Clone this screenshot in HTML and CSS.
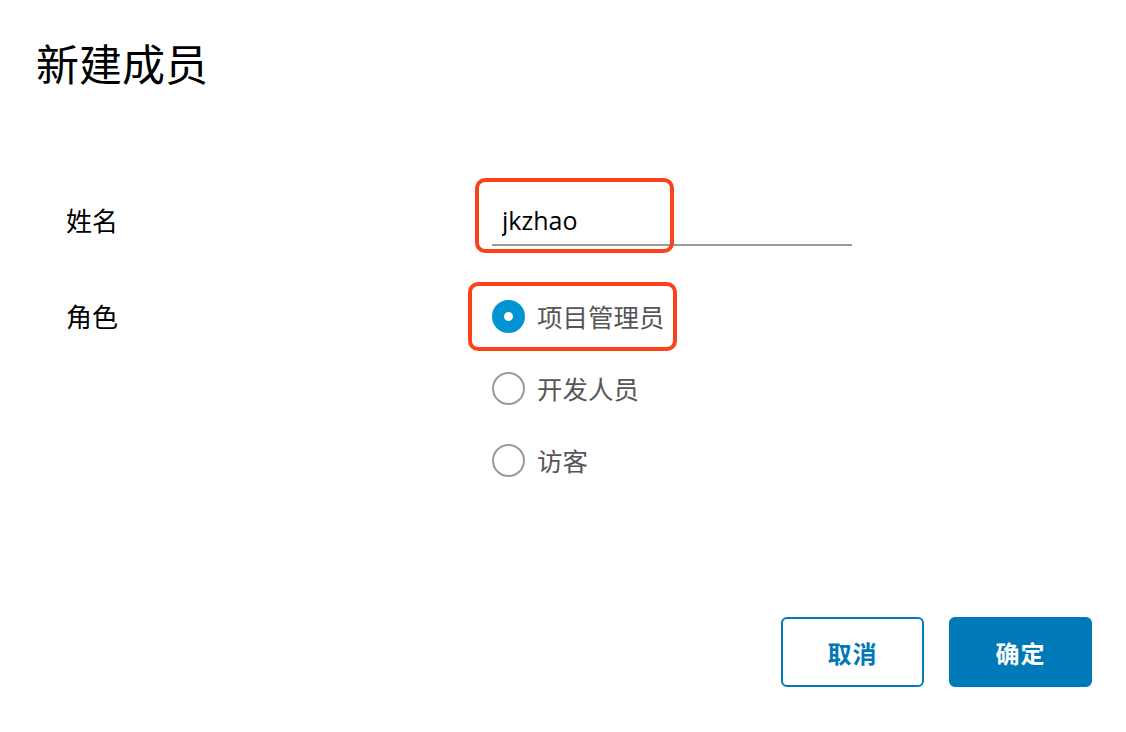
FILE: index.html
```html
<!DOCTYPE html>
<html lang="zh-CN">
<head>
<meta charset="utf-8">
<title>新建成员</title>
<link rel="stylesheet" href="styles.css">
</head>
<body>
<div class="dialog">
  <h1 class="title">新建成员</h1>
  <div class="form">
    <div class="label label-name">姓名</div>
    <div class="field marked marked-input">
      <input class="text-input" type="text" value="jkzhao">
    </div>
    <div class="label label-role">角色</div>
    <div class="radios">
      <label class="radio marked marked-radio"><span class="dot checked"></span><span class="radio-text">项目管理员</span></label>
      <label class="radio"><span class="dot"></span><span class="radio-text">开发人员</span></label>
      <label class="radio"><span class="dot"></span><span class="radio-text">访客</span></label>
    </div>
  </div>
  <div class="footer">
    <button class="btn btn-outline">取消</button>
    <button class="btn btn-primary">确定</button>
  </div>
</div>
</body>
</html>
```

FILE: styles.css
```css
*, *::before, *::after { box-sizing: border-box; }
html, body { margin: 0; padding: 0; background: #fff; }
body {
  font-family: "Noto Sans CJK SC", "Noto Sans", sans-serif;
  color: #000;
}
.dialog {
  width: 1126px;
  height: 732px;
  padding: 41px 34px 0 36px;
  display: flex;
  flex-direction: column;
}
.title {
  margin: 0;
  font-size: 43px;
  line-height: 42px;
  font-weight: 400;
  color: #000;
}
.form {
  margin-top: 113px;
  padding-left: 30px;
  display: grid;
  grid-template-columns: 426px 360px;
  row-gap: 52px;
}
.label {
  font-size: 26px;
  color: #000;
}
.label-name { line-height: 48px; }
.label-role { line-height: 36px; }
.marked { position: relative; }
.marked::after {
  content: "";
  position: absolute;
  border: 4px solid #fc421d;
  border-radius: 10px;
  pointer-events: none;
}
.field {
  height: 50px;
  border-bottom: 2px solid #9a9a9a;
}
.marked-input::after { left: -17px; top: -18px; width: 199px; height: 75px; }
.text-input {
  display: block;
  width: 100%;
  height: 48px;
  border: 0;
  outline: none;
  padding: 0 0 0 10px;
  margin: 0;
  background: transparent;
  font-family: "Open Sans", "Lato", sans-serif;
  font-size: 25px;
  color: #000;
}
.radios {
  display: flex;
  flex-direction: column;
  gap: 36px;
}
.radio {
  display: flex;
  align-items: center;
  height: 36px;
  gap: 12px;
  width: max-content;
}
.marked-radio::after { left: -24px; top: -16px; width: 209px; height: 69px; }
.dot {
  width: 33px;
  height: 33px;
  border-radius: 50%;
  border: 2px solid #9a9a9a;
  flex: none;
}
.dot.checked {
  border: 12.5px solid #0094d2;
  background: #fff;
}
.radio-text {
  font-size: 25.5px;
  color: #565656;
  line-height: 36px;
}
.footer {
  margin-top: 139px;
  display: flex;
  justify-content: flex-end;
  gap: 25px;
}
.btn {
  width: 143px;
  height: 70px;
  border-radius: 6px;
  font-family: "Noto Sans CJK SC", sans-serif;
  font-size: 24px;
  font-weight: 700;
  letter-spacing: 1px;
  padding: 0;
  cursor: pointer;
}
.btn-outline {
  background: #fff;
  border: 2px solid #0079b8;
  color: #0079b8;
}
.btn-primary {
  background: #0079b8;
  border: 2px solid #0079b8;
  color: #fff;
}
```
